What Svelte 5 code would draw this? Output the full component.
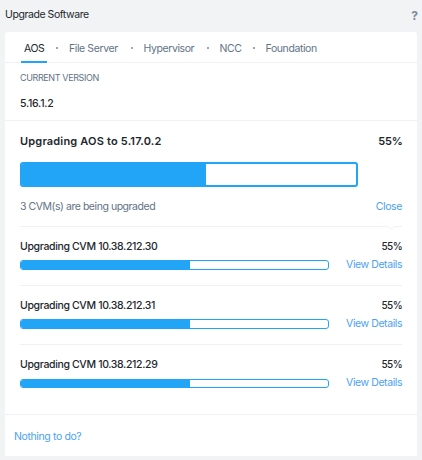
<script>
  const tabs = [
    { label: 'AOS', width: 20, active: true },
    { label: 'File Server', width: 49.5 },
    { label: 'Hypervisor', width: 51 },
    { label: 'NCC', width: 21 },
    { label: 'Foundation', width: 53 }
  ];
  const nodes = ['10.38.212.30', '10.38.212.31', '10.38.212.29'];
  const progress = 55;
</script>

<div class="window">
  <header>
    <h1>Upgrade Software</h1>
    <span class="help">?</span>
  </header>

  <main>
    <nav>
      {#each tabs as tab, i}
        {#if i > 0}<i class="dot"></i>{/if}
        <span class="tab" class:active={tab.active} style:width="{tab.width}px">{tab.label}</span>
      {/each}
    </nav>

    <section class="version">
      <div class="caption">CURRENT VERSION</div>
      <div class="number">5.16.1.2</div>
    </section>

    <section class="summary">
      <div class="line title"><span>Upgrading AOS to 5.17.0.2</span><span class="pct">{progress}%</span></div>
      <div class="bar large"><div class="fill" style:width="{progress}%"></div></div>
      <div class="line status"><span>3 CVM(s) are being upgraded</span><span class="link close">Close</span></div>
      <svg class="notch" width="8" height="4" viewBox="0 0 8 4"><path d="M0 0H8L4 3Z" fill="#fff" /><path d="M0 .5L4 3L8 .5" fill="none" stroke="#f2f3f5" /></svg>
    </section>

    <section class="nodes">
      {#each nodes as ip}
        <div class="node">
          <div class="info">
            <div class="name">Upgrading CVM {ip}</div>
            <div class="bar small"><div class="fill" style:width="{progress}%"></div></div>
          </div>
          <div class="side">
            <div class="amount">{progress}%</div>
            <div class="link details">View Details</div>
          </div>
        </div>
      {/each}
    </section>

    <footer><span class="link nothing">Nothing to do?</span></footer>
  </main>
</div>

<style>
  :global(body) { background: #f2f3f5; }
  .window {
    box-sizing: border-box;
    width: 422px;
    height: 460px;
    padding: 0 5px 4px;
    background: #f2f3f5;
    font: 10.5px/16px Inter, "Open Sans", sans-serif;
    color: #22272e;
    white-space: nowrap;
    overflow: hidden;
  }
  header { display: flex; justify-content: space-between; height: 32px; }
  h1 { margin: 7px 0 0; font-size: 10.5px; font-weight: 400; line-height: 16px; letter-spacing: -0.43px; }
  .help { margin: 8px -1px 0 0; font-size: 12px; font-weight: 700; color: #7b8a9c; }
  main { box-sizing: border-box; height: 424px; background: #fff; border-radius: 3px 3px 0 0; }
  nav { display: flex; box-sizing: border-box; height: 31px; padding-left: 19px; border-bottom: 1px solid #eff1f3; }
  .tab { position: relative; color: #627386; line-height: 34px; letter-spacing: -0.4px; }
  .active { color: #22272e; }
  .active::after { content: ''; position: absolute; left: -3px; top: 29px; width: 26px; height: 2px; background: #22a5f7; }
  .dot { width: 2px; height: 2px; margin: 15px 11px 0 12px; background: #7b8a9c; border-radius: 1px; }
  .version { box-sizing: border-box; height: 58px; padding: 7px 15px 0; border-bottom: 1px solid #eff1f3; }
  .caption { font-size: 9px; color: #627386; letter-spacing: -0.38px; }
  .number { margin-top: 10px; font-weight: 500; letter-spacing: -0.25px; }
  .summary { position: relative; box-sizing: border-box; height: 106px; margin: 0 15px; padding-top: 12px; border-bottom: 1px solid #eff1f3; }
  .notch { position: absolute; right: 7px; bottom: -4px; }
  .line { display: flex; justify-content: space-between; }
  .title { font-size: 11px; font-weight: 600; letter-spacing: 0.18px; }
  .pct { margin-right: -0.5px; letter-spacing: -0.2px; }
  .bar { box-sizing: border-box; background: #fff; border: 1px solid #22a5f7; overflow: hidden; }
  .fill { height: 100%; background: #22a5f7; }
  .large { width: 338px; height: 25px; margin-top: 13px; border-width: 2px; border-radius: 3px; }
  .small { width: 309px; height: 10px; margin-top: 5px; border-radius: 3px; }
  .node:last-child .small { height: 9px; margin-top: 6px; }
  .status { margin-top: 12px; color: #627386; letter-spacing: -0.45px; }
  .link { color: #4d9ff5; }
  .close { letter-spacing: -0.4px; }
  .nodes { height: 187px; padding: 0 15px; border-bottom: 1px solid #eff1f3; }
  .node { display: flex; justify-content: space-between; box-sizing: border-box; height: 59px; padding-top: 12px; border-bottom: 1px solid #eff1f3; }
  .node:last-child { border-bottom: 0; }
  .name { font-weight: 500; letter-spacing: -0.35px; }
  .side { text-align: right; }
  .amount { font-size: 10px; line-height: 14px; font-weight: 500; letter-spacing: -0.6px; }
  .details { margin-top: 4px; letter-spacing: -0.42px; }
  footer { padding: 14px 9px 0; }
  .nothing { letter-spacing: -0.38px; }
</style>
